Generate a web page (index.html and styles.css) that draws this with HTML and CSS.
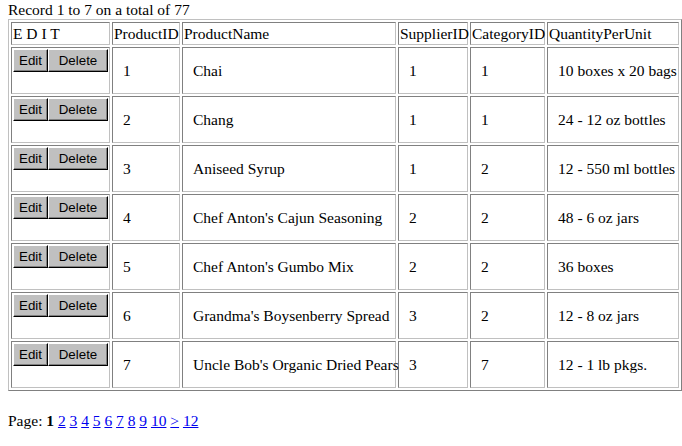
FILE: index.html
```html
<!DOCTYPE html>
<html>
<head>
<meta charset="utf-8">
<title>Products</title>
<link rel="stylesheet" href="styles.css">
</head>
<body>
<div class="summary">Record 1 to 7 on a total of 77</div>
<table class="grid">
  <tr class="head">
    <td class="c-edit">E D I T</td>
    <td class="c-id">ProductID</td>
    <td class="c-name">ProductName</td>
    <td class="c-sup">SupplierID</td>
    <td class="c-cat">CategoryID</td>
    <td class="c-qty">QuantityPerUnit</td>
  </tr>
  <tr class="row">
    <td class="actions"><button class="btn btn-edit">Edit</button><button class="btn btn-del">Delete</button></td>
    <td>1</td><td>Chai</td><td>1</td><td>1</td><td>10 boxes x 20 bags</td>
  </tr>
  <tr class="row">
    <td class="actions"><button class="btn btn-edit">Edit</button><button class="btn btn-del">Delete</button></td>
    <td>2</td><td>Chang</td><td>1</td><td>1</td><td>24 - 12 oz bottles</td>
  </tr>
  <tr class="row">
    <td class="actions"><button class="btn btn-edit">Edit</button><button class="btn btn-del">Delete</button></td>
    <td>3</td><td>Aniseed Syrup</td><td>1</td><td>2</td><td>12 - 550 ml bottles</td>
  </tr>
  <tr class="row">
    <td class="actions"><button class="btn btn-edit">Edit</button><button class="btn btn-del">Delete</button></td>
    <td>4</td><td>Chef Anton's Cajun Seasoning</td><td>2</td><td>2</td><td>48 - 6 oz jars</td>
  </tr>
  <tr class="row">
    <td class="actions"><button class="btn btn-edit">Edit</button><button class="btn btn-del">Delete</button></td>
    <td>5</td><td>Chef Anton's Gumbo Mix</td><td>2</td><td>2</td><td>36 boxes</td>
  </tr>
  <tr class="row">
    <td class="actions"><button class="btn btn-edit">Edit</button><button class="btn btn-del">Delete</button></td>
    <td>6</td><td>Grandma's Boysenberry Spread</td><td>3</td><td>2</td><td>12 - 8 oz jars</td>
  </tr>
  <tr class="row">
    <td class="actions"><button class="btn btn-edit">Edit</button><button class="btn btn-del">Delete</button></td>
    <td>7</td><td>Uncle Bob's Organic Dried Pears</td><td>3</td><td>7</td><td>12 - 1 lb pkgs.</td>
  </tr>
</table>
<div class="pager">Page: <b>1</b> <a href="#">2</a> <a href="#">3</a> <a href="#">4</a> <a href="#">5</a> <a href="#">6</a> <a href="#">7</a> <a href="#">8</a> <a href="#">9</a> <a href="#">10</a> <a href="#">&gt;</a> <a href="#">12</a></div>
</body>
</html>
```

FILE: styles.css
```css
html, body {
  background: #ffffff;
}
body {
  margin: 0 0 0 8px;
  font-family: "Liberation Serif", "Times New Roman", serif;
  font-size: 15.5px;
  line-height: 18px;
  color: #000000;
}
.summary {
  padding-top: 1px;
  height: 18px;
}
.grid {
  table-layout: fixed;
  width: 674px;
  border-collapse: separate;
  border-spacing: 2px;
  border: 1px solid;
  border-color: #c0c0c0 #808080 #808080 #c0c0c0;
}
.grid td {
  box-sizing: border-box;
  border: 1px solid;
  border-color: #808080 #c0c0c0 #c0c0c0 #808080;
  white-space: nowrap;
  overflow: visible;
}
.head td {
  height: 23px;
  padding: 1px;
  vertical-align: middle;
}
.c-edit { width: 99px; }
.c-id { width: 68px; }
.c-name { width: 214px; }
.c-sup { width: 70px; }
.c-cat { width: 75px; }
.c-qty { width: 132px; }
.row td {
  height: 47px;
  padding: 1px 0 1px 10px;
  vertical-align: middle;
}
.row td.actions {
  padding: 1px;
  vertical-align: top;
}
.btn {
  box-sizing: border-box;
  height: 23px;
  margin: 0;
  padding: 0;
  font-family: "Liberation Sans", Arial, sans-serif;
  font-size: 13.33px;
  color: #000000;
  background: #c0c0c0;
  border: 1px solid;
  border-color: #ffffff #000000 #000000 #ffffff;
  box-shadow: inset -1px -1px 0 #808080;
  vertical-align: top;
  text-align: center;
}
.btn-edit { width: 35px; }
.btn-del { width: 60px; }
.pager {
  margin-top: 21px;
}
.pager a {
  color: #0000ee;
  text-decoration: underline;
}
```
